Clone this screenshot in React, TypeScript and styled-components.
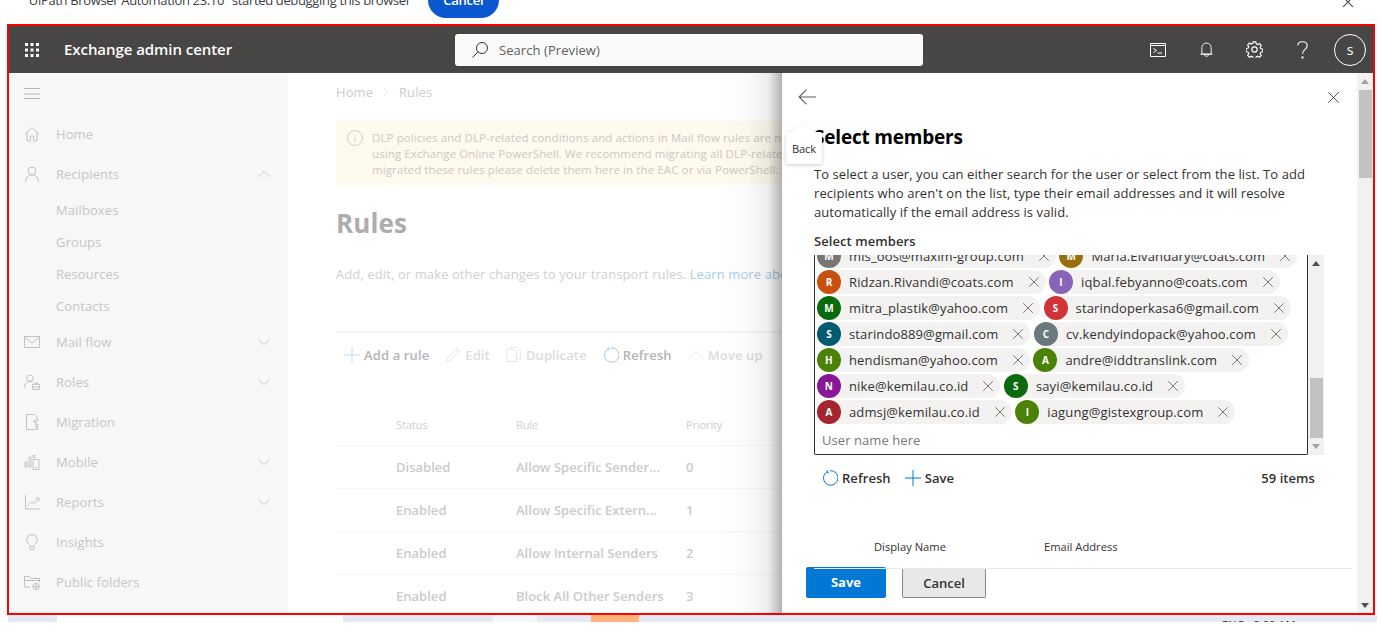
import styled, { createGlobalStyle } from "styled-components";
import { ChevronDown, ChevronUp, ChevronRight, X } from "lucide-react";

const GlobalStyle = createGlobalStyle`
  html, body { margin: 0; padding: 0; background: #fff; overflow: hidden; }
  body { font-family: "Open Sans", "Liberation Sans", sans-serif; font-size: 13px; letter-spacing: 0.07px; color: #323130; }
  * { box-sizing: border-box; }
`;

const Page = styled.div`
  width: 1382px;
  height: 639px;
  overflow: hidden;
`;

const InfoBar = styled.div`
  height: 24px;
  overflow: hidden;
  position: relative;
  display: flex;
  align-items: center;
  padding-left: 24px;
  gap: 17px;
  color: #3c4043;
  font-size: 13px;
  letter-spacing: -0.34px;
  & > * { margin-top: -24px; }
`;

const InfoCancel = styled.button`
  width: 71px;
  height: 36px;
  border: none;
  border-radius: 18px;
  background: #0b57d0;
  color: #fff;
  font: 600 13px "Open Sans", sans-serif;
  letter-spacing: -0.25px;
`;

const InfoClose = styled.span`
  position: absolute;
  left: 1342px;
  top: -6px;
  margin: 0;
  color: #444;
`;

const Frame = styled.div`
  margin: 0 7px;
  height: 591px;
  border: 2px solid #f00;
  display: flex;
  flex-direction: column;
  overflow: hidden;
`;

const Header = styled.header`
  height: 47px;
  flex: none;
  background: #484644;
  display: flex;
  align-items: center;
  color: #fff;
  padding-left: 15px;
`;

const Title = styled.div`
  font-size: 15px;
  font-weight: 600;
  margin: 0 0 2px 24px;
  width: 391px;
  letter-spacing: -0.06px;
`;

const SearchBox = styled.div`
  width: 468px;
  height: 32px;
  background: #fafafa;
  border-radius: 3px;
  display: flex;
  align-items: center;
  padding-left: 17px;
  gap: 11px;
  color: #605e5c;
  font-size: 13px;
`;

const HeaderIcons = styled.div`
  margin-left: auto;
  display: flex;
  align-items: center;
  padding-right: 7px;
`;

const HeaderIcon = styled.div<{ $w: number }>`
  width: ${(p) => p.$w}px;
  display: flex;
  justify-content: flex-start;
`;

const Avatar = styled.div`
  width: 32px;
  height: 32px;
  border: 1px solid #fff;
  border-radius: 50%;
  display: flex;
  align-items: center;
  justify-content: center;
  font-size: 14px;
`;

const Body = styled.div`
  flex: 1;
  min-height: 0;
  display: flex;
`;

const Sidebar = styled.nav`
  width: 279px;
  flex: none;
  background: #f7f7f7;
  color: #c6c6c6;
  font-size: 13px;
  letter-spacing: 0.1px;
`;

const MenuToggle = styled.div`
  height: 41px;
  display: flex;
  align-items: center;
  padding: 0 0 0 15px;
`;

const NavItem = styled.div<{ $sub?: boolean }>`
  height: ${(p) => (p.$sub ? 32 : 40)}px;
  display: flex;
  align-items: center;
  padding-left: ${(p) => (p.$sub ? 47 : 15)}px;
  svg.lead { margin-right: 16px; flex: none; }
`;

const NavChevron = styled.span`
  margin-left: auto;
  margin-right: 13px;
  display: flex;
`;

const Main = styled.main`
  width: 494px;
  flex: none;
  position: relative;
  overflow: hidden;
  padding: 0 0 0 48px;
  color: #c9c9c9;

  &::after {
    content: "";
    position: absolute;
    top: 0;
    right: 0;
    bottom: 0;
    width: 64px;
    background: linear-gradient(to right, rgba(0, 0, 0, 0), rgba(0, 0, 0, 0.015) 45%, rgba(0, 0, 0, 0.07) 78%, rgba(0, 0, 0, 0.3));
  }
`;

const Breadcrumb = styled.div`
  height: 38px;
  display: flex;
  align-items: center;
  gap: 6px;
  color: #cdcdcd;
  white-space: nowrap;
`;

const Notice = styled.div`
  margin-top: 10px;
  width: 520px;
  height: 64px;
  background: #fefaee;
  padding: 9px 0 0 11px;
  display: flex;
  gap: 9px;
  font-size: 11.5px;
  line-height: 16px;
  color: #cbc8c2;
  white-space: nowrap;
  letter-spacing: 0.1px;

  svg { flex: none; }
`;

const PageTitle = styled.h1`
  margin: 20px 0 0 0;
  height: 36px;
  font-size: 26px;
  line-height: 36px;
  font-weight: 700;
  color: #adadad;
  letter-spacing: 0.1px;
`;

const Lead = styled.div`
  margin-top: 23px;
  color: #cfcfcf;
  white-space: nowrap;
  line-height: 20px;
  letter-spacing: 0.1px;
`;

const LearnLink = styled.span`
  color: #a9cdea;
`;

const Toolbar = styled.div`
  margin-top: 47px;
  width: 520px;
  height: 46px;
  border-top: 2px solid #f5f5f5;
  display: flex;
  align-items: center;
  padding-left: 8px;
  white-space: nowrap;
  font-weight: 600;
  letter-spacing: 0.12px;
`;

const ToolButton = styled.span<{ $tone: string }>`
  display: inline-flex;
  align-items: center;
  gap: 4px;
  margin-right: 16px;
  color: ${(p) => p.$tone};
`;

const RuleTable = styled.div`
  margin-top: 20px;
  width: 520px;
`;

const RuleRow = styled.div<{ $head?: boolean }>`
  height: ${(p) => (p.$head ? 49 : 43)}px;
  display: grid;
  grid-template-columns: 120px 170px 1fr;
  align-items: center;
  padding: ${(p) => (p.$head ? "7px" : "0")} 0 0 60px;
  border-bottom: 1px solid #f6f6f6;
  font-size: ${(p) => (p.$head ? 11.2 : 13)}px;
  font-weight: ${(p) => (p.$head ? 400 : 600)};
  color: ${(p) => (p.$head ? "#cfcfcf" : "#cbcbcb")};
  white-space: nowrap;
  letter-spacing: ${(p) => (p.$head ? "-0.2px" : "0.02px")};
`;

const Panel = styled.aside`
  flex: 1;
  min-width: 0;
  display: flex;
  background: #fff;
  position: relative;
`;

const PanelBody = styled.div`
  flex: 1;
  min-width: 0;
  padding: 0 0 0 32px;
`;

const PanelTop = styled.div`
  height: 48px;
  display: flex;
  align-items: center;
  justify-content: space-between;
  margin-left: -16px;
  padding: 0 17px 0 0;
`;

const PanelTitle = styled.h2`
  margin: 0;
  height: 32px;
  font-size: 19px;
  line-height: 32px;
  font-weight: 700;
  color: #000;
  letter-spacing: -0.2px;
`;

const Intro = styled.p`
  margin: 12px 0 0;
  width: 500px;
  line-height: 19px;
  color: #323130;
`;

const FieldLabel = styled.div`
  margin-top: 10px;
  height: 19px;
  line-height: 19px;
  font-weight: 600;
`;

const FieldWrap = styled.div`
  width: 511px;
  height: 200px;
  margin-top: 4px;
  display: flex;
  border-bottom: 1px solid #eee;
`;

const ChipField = styled.div`
  width: 494px;
  height: 200px;
  border: 1px solid #323130;
  border-top: none;
  overflow: hidden;
  padding: 0 0 0 2px;
  border-radius: 0 0 2px 2px;
`;

const ChipRows = styled.div`
  margin-top: -11px;
  display: flex;
  flex-direction: column;
  gap: 2px;
`;

const ChipRow = styled.div`
  display: flex;
  gap: 3.5px;
`;

const Chip = styled.div`
  height: 24px;
  background: #f3f2f1;
  border-radius: 12px;
  display: inline-flex;
  align-items: center;
  white-space: nowrap;
  color: #323130;
  letter-spacing: 0.13px;
`;

const ChipAvatar = styled.span<{ $bg: string }>`
  width: 24px;
  height: 24px;
  border-radius: 50%;
  background: ${(p) => p.$bg};
  color: #fff;
  font-size: 10px;
  font-weight: 700;
  display: flex;
  align-items: center;
  justify-content: center;
  margin-right: 8px;
  flex: none;
`;

const ChipClose = styled.span`
  margin: 0 3px 0 11px;
  display: flex;
  color: #605e5c;
`;

const NameInput = styled.div`
  height: 28px;
  margin-top: 4px;
  padding-left: 5px;
  line-height: 24px;
  color: #777;
`;

const ScrollTrack = styled.div<{ $thumbTop: number; $thumbHeight: number }>`
  width: 16px;
  flex: none;
  background: #f1f1f1;
  position: relative;
  height: 100%;

  &::before {
    content: "";
    position: absolute;
    left: 2px;
    right: 1px;
    top: ${(p) => p.$thumbTop}px;
    height: ${(p) => p.$thumbHeight}px;
    background: #c1c1c1;
  }
`;

const ScrollArrow = styled.span<{ $down?: boolean; $dark?: boolean }>`
  position: absolute;
  left: 4px;
  width: 0;
  height: 0;
  border-left: 4px solid transparent;
  border-right: 4px solid transparent;
  ${(p) =>
    p.$down
      ? `bottom: 5px; border-top: 5px solid ${p.$dark ? "#505050" : "#a3a3a3"};`
      : `top: 6px; border-bottom: 5px solid ${p.$dark ? "#505050" : "#a3a3a3"};`}
`;

const ListTools = styled.div`
  width: 501px;
  height: 46px;
  display: flex;
  align-items: center;
  padding-left: 8px;
  gap: 14px;
  color: #323130;
  font-weight: 600;
`;

const ListTool = styled.span`
  display: inline-flex;
  align-items: center;
  gap: 4px;
`;

const ItemCount = styled.span`
  margin-left: auto;
`;

const ListHeader = styled.div`
  margin-top: 24px;
  height: 44px;
  width: 538px;
  border-bottom: 1px solid #e8e8e8;
  display: grid;
  grid-template-columns: 170px 1fr;
  padding: 14px 0 0 60px;
  font-size: 11.2px;
  letter-spacing: 0px;
  position: relative;
  z-index: 1;
`;

const PanelFooter = styled.div`
  margin: -2px 0 0 -8px;
  display: flex;
  gap: 16px;
`;

const SaveButton = styled.button`
  width: 80px;
  height: 31px;
  padding: 0 0 1px;
  border: none;
  border-radius: 2px;
  background: #0078d4;
  color: #fff;
  font: 700 13px "Open Sans", sans-serif;
  letter-spacing: 0;
`;

const CancelButton = styled.button`
  width: 84px;
  height: 30px;
  padding: 0 0 1px;
  margin-top: 1px;
  border: 1px solid #8a8886;
  border-top-color: #ddd;
  border-radius: 2px;
  background: #e8e8e8;
  color: #323130;
  font: 600 13px "Open Sans", sans-serif;
  letter-spacing: 0;
`;

const BackTip = styled.div`
  position: absolute;
  left: 4px;
  top: 59px;
  width: 36px;
  height: 32px;
  background: #fff;
  border-radius: 2px;
  box-shadow: 0 1px 4px rgba(0, 0, 0, 0.2);
  font-size: 11.2px;
  display: flex;
  align-items: center;
  justify-content: center;
  letter-spacing: -0.2px;

  &::before {
    content: "";
    position: absolute;
    left: 10px;
    top: -7px;
    width: 14px;
    height: 14px;
    background: #fff;
    transform: rotate(45deg);
    box-shadow: -1px -1px 2px rgba(0, 0, 0, 0.05);
  }
`;

const TipLabel = styled.span`
  position: relative;
`;

const TaskStrip = styled.div`
  margin-left: 8px;
  width: 1369px;
  height: 7px;
  overflow: hidden;
  display: flex;
  background: #e3eaf3;
  position: relative;
`;

const TaskCell = styled.div<{ $w: number; $bg: string }>`
  width: ${(p) => p.$w}px;
  flex: none;
  background: ${(p) => p.$bg};
`;

const TaskClock = styled.span`
  position: absolute;
  left: 1214px;
  top: 3px;
  font-size: 11px;
  line-height: 14px;
  color: #222;
  white-space: pre;
`;

const Line = (p: { d: string; size?: number; color?: string; box?: number; className?: string; w?: number }) => (
  <svg className={p.className} width={p.size ?? 16} height={p.size ?? 16} viewBox={`0 0 ${p.box ?? 16} ${p.box ?? 16}`} fill="none" stroke={p.color ?? "#c4c4c4"} strokeWidth={p.w ?? 1}>
    <path d={p.d} />
  </svg>
);

const icons = {
  home: "M1 8 8 1.5 15 8M3 6.5V15h3.5v-5h3v5H13V6.5",
  person: "M8 1a4 4 0 1 0 0 8 4 4 0 0 0 0-8zM1.5 16c0-4 2.5-7 6.500-7s6.500 3 6.500 7",
  mail: "M.5 2.500h15v11H.5zM.5 3 8 9l7.500-6",
  roles: "M6 1a3.200 3.200 0 1 0 0 6.400A3.200 3.200 0 0 0 6 1zM.5 14c0-4 2-6.500 5.500-6.500 1 0 2 .3 2.500.6M8.500 10.500h7v5h-7zM10.500 10.500V9h3v1.500M8.500 13h7",
  migration: "M2.500 15.500V.5h8l3 3v4M2.500 15.500h8M13.500 10v5.500h-1.500V9M12.500 5 9.500 7.500l3 2.500M9.500 7.500H13",
  mobile: "M1 8h2v5H1zM5 3h2v10H5zM9 5.500h6v10H9zM9 1.500h2v2H9zM11 13.500h2",
  reports: "M1.500 1v14H15.500M3.500 12l4-4.500 2.500 2L15 4M11.500 4H15v3.500",
  bulb: "M8 .5a5.300 5.300 0 0 0-3 9.700c.6.5 1 1.200 1 2.300h4c0-1.100.4-1.800 1-2.300A5.300 5.300 0 0 0 8 .5zM6 12.500v3h4v-3",
  folder: "M.5 13V2.500h5L7 4.500h8.500v4M.5 13h6M.5 6.500H15M9 12.500a3.200 3.200 0 1 0 6.400 0 3.200 3.200 0 0 0-6.400 0zM9 12.500h6.400M12.200 9.300v6.400",
  plus: "M8 0v16M0 8h16",
  pencil: "M1 15l1-4L12 1l3 3L5 14zM10.500 2.500l3 3",
  copy: "M1 2h6.500l3 3v9.500H1zM4.500 2V.5h6l4 4V12h-4",
  refresh: "M5 1.800A7.200 7.200 0 1 0 8 .8M5.500 .3 5 2l1.800 .8",
  up: "M.5 12 8 4.500 15.500 12",
  back: "M16 8H1M7.500 1.500 1 8l6.500 6.500",
  close: "M1.500 1.500l13 13M14.500 1.500l-13 13",
  info: "M8 .5a7.500 7.500 0 1 0 0 15 7.500 7.500 0 0 0 0-15zM8 7v5M8 4.500v1.200",
};

const GridDots = () => (
  <svg width="16" height="16" viewBox="0 0 16 16" fill="#fff">
    {[1, 6.500, 12].flatMap((y) => [1, 6.500, 12].map((x) => <rect key={`${x}-${y}`} x={x} y={y} width="3" height="3" />))}
  </svg>
);

type NavEntry = { label: string; icon?: keyof typeof icons; sub?: boolean; chevron?: "up" | "down" };

const navItems: NavEntry[] = [
  { label: "Home", icon: "home" },
  { label: "Recipients", icon: "person", chevron: "up" },
  { label: "Mailboxes", sub: true },
  { label: "Groups", sub: true },
  { label: "Resources", sub: true },
  { label: "Contacts", sub: true },
  { label: "Mail flow", icon: "mail", chevron: "down" },
  { label: "Roles", icon: "roles", chevron: "down" },
  { label: "Migration", icon: "migration" },
  { label: "Mobile", icon: "mobile", chevron: "down" },
  { label: "Reports", icon: "reports", chevron: "down" },
  { label: "Insights", icon: "bulb" },
  { label: "Public folders", icon: "folder" },
];

const rules = [
  ["Disabled", "Allow Specific Sender...", "0"],
  ["Enabled", "Allow Specific Extern...", "1"],
  ["Enabled", "Allow Internal Senders", "2"],
  ["Enabled", "Block All Other Senders", "3"],
];

const chipRows: [string, string, string][][] = [
  [["M", "#7a7574", "mis_oos@maxim-group.com"], ["M", "#986f0b", "Maria.Elvandary@coats.com"]],
  [["R", "#ca5010", "Ridzan.Rivandi@coats.com"], ["I", "#8764b8", "iqbal.febyanno@coats.com"]],
  [["M", "#0b6a0b", "mitra_plastik@yahoo.com"], ["S", "#d13438", "starindoperkasa6@gmail.com"]],
  [["S", "#005b70", "starindo889@gmail.com"], ["C", "#69797e", "cv.kendyindopack@yahoo.com"]],
  [["H", "#498205", "hendisman@yahoo.com"], ["A", "#498205", "andre@iddtranslink.com"]],
  [["N", "#881798", "nike@kemilau.co.id"], ["S", "#0b6a0b", "sayi@kemilau.co.id"]],
  [["A", "#a4262c", "admsj@kemilau.co.id"], ["I", "#498205", "iagung@gistexgroup.com"]],
];

const App = () => (
  <Page>
    <GlobalStyle />
    <InfoBar>
      <span>"UiPath Browser Automation 23.10" started debugging this browser</span>
      <InfoCancel>Cancel</InfoCancel>
      <InfoClose><Line d={icons.close} size={12} color="#444" w={1.4} /></InfoClose>
    </InfoBar>
    <Frame>
      <Header>
        <GridDots />
        <Title>Exchange admin center</Title>
        <SearchBox>
          <svg width="16" height="16" viewBox="0 0 16 16" fill="none" stroke="#323130">
            <path d="M10 .5a5.500 5.500 0 1 0 0 11 5.500 5.500 0 0 0 0-11zM6 9.800.5 15.500" />
          </svg>
          Search (Preview)
        </SearchBox>
        <HeaderIcons>
          <HeaderIcon $w={50}>
            <svg width="16" height="14" viewBox="0 0 16 14" fill="none" stroke="#fff">
              <path d="M.5 .5h15v13H.5zM.5 2.500h15M3.500 5.500l3 2-3 2M7.500 10h4.500" />
            </svg>
          </HeaderIcon>
          <HeaderIcon $w={46}>
            <svg width="13" height="16" viewBox="0 0 14 16" fill="none" stroke="#fff">
              <path d="M2 12.500V5.500a5 5 0 0 1 10 0v7zM.5 12.500h13M5 13c0 2.500 4 2.500 4 0" />
            </svg>
          </HeaderIcon>
          <HeaderIcon $w={51}>
            <svg width="17" height="17" viewBox="0 0 16 16" fill="none" stroke="#fff" strokeWidth="1.100">
              <path d="M6.700.7h2.600l.4 2 1.500.7 1.800-1 1.700 1.900-1.100 1.600.6 1.500 2 .5v2.500l-2 .5-.6 1.500 1.100 1.700-1.800 1.800-1.700-1.100-1.500.6-.4 2H6.700l-.4-2-1.500-.6-1.700 1.100-1.800-1.800 1.100-1.700-.6-1.500-2-.5V7.400l2-.5.6-1.500L1.300 3.800 3 1.900l1.800 1 1.500-.7z" transform="translate(.3 .1) scale(.96)" />
              <circle cx="8" cy="8" r="2.500" />
            </svg>
          </HeaderIcon>
          <HeaderIcon $w={37}>
            <svg width="11" height="18" viewBox="0 0 11 18" fill="none" stroke="#fff" strokeWidth="1.100">
              <path d="M.8 4.500C.8 2 3 .7 5.500 .7c2.600 0 4.700 1.500 4.700 4 0 3.800-4.700 3.700-4.700 8.300" />
              <circle cx="5.500" cy="16.500" r=".6" fill="#fff" />
            </svg>
          </HeaderIcon>
          <Avatar>s</Avatar>
        </HeaderIcons>
      </Header>
      <Body>
        <Sidebar>
          <MenuToggle>
            <Line d="M0 2.500h16M0 8h16M0 12.500h16" color="#b4b4b4" />
          </MenuToggle>
          {navItems.map((item) => (
            <NavItem key={item.label} $sub={item.sub}>
              {item.icon && <Line className="lead" d={icons[item.icon]} color="#c2c2c2" />}
              {item.label}
              {item.chevron && (
                <NavChevron>
                  {item.chevron === "up"
                    ? <ChevronUp size={22} strokeWidth={0.8} color="#b8b8b8" />
                    : <ChevronDown size={22} strokeWidth={0.8} color="#b8b8b8" />}
                </NavChevron>
              )}
            </NavItem>
          ))}
        </Sidebar>
        <Main>
          <Breadcrumb>
            Home
            <ChevronRight size={14} strokeWidth={1} color="#d0d0d0" />
            Rules
          </Breadcrumb>
          <Notice>
            <Line d={icons.info} color="#d0cdc6" />
            <div>
              DLP policies and DLP-related conditions and actions in Mail flow rules are no longer supported<br />
              using Exchange Online PowerShell. We recommend migrating all DLP-related rules to the new<br />
              migrated these rules please delete them here in the EAC or via PowerShell. Learn more
            </div>
          </Notice>
          <PageTitle>Rules</PageTitle>
          <Lead>Add, edit, or make other changes to your transport rules. <LearnLink>Learn more about rules</LearnLink></Lead>
          <Toolbar>
            <ToolButton $tone="#b4b4b4"><Line d={icons.plus} color="#c2dcf2" />Add a rule</ToolButton>
            <ToolButton $tone="#dcdcdc"><Line d={icons.pencil} color="#e6e6e6" />Edit</ToolButton>
            <ToolButton $tone="#dcdcdc"><Line d={icons.copy} color="#e6e6e6" />Duplicate</ToolButton>
            <ToolButton $tone="#b4b4b4"><Line d={icons.refresh} color="#9cc6e8" />Refresh</ToolButton>
            <ToolButton $tone="#dcdcdc"><Line d={icons.up} color="#e6e6e6" />Move up</ToolButton>
          </Toolbar>
          <RuleTable>
            <RuleRow $head><span>Status</span><span>Rule</span><span>Priority</span></RuleRow>
            {rules.map(([status, rule, priority]) => (
              <RuleRow key={rule}><span>{status}</span><span>{rule}</span><span>{priority}</span></RuleRow>
            ))}
          </RuleTable>
        </Main>
        <Panel>
          <PanelBody>
            <PanelTop>
              <Line d={icons.back} size={18} box={16} color="#605e5c" />
              <Line d={icons.close} size={13} color="#323130" />
            </PanelTop>
            <PanelTitle>Select members</PanelTitle>
            <Intro>
              To select a user, you can either search for the user or select from the list. To add recipients who aren't on the list, type their email addresses and it will resolve automatically if the email address is valid.
            </Intro>
            <FieldLabel>Select members</FieldLabel>
            <FieldWrap>
              <ChipField>
                <ChipRows>
                  {chipRows.map((row) => (
                    <ChipRow key={row[0][2]}>
                      {row.map(([letter, bg, mail]) => (
                        <Chip key={mail}>
                          <ChipAvatar $bg={bg}>{letter}</ChipAvatar>
                          {mail}
                          <ChipClose><X size={18} strokeWidth={1.1} /></ChipClose>
                        </Chip>
                      ))}
                    </ChipRow>
                  ))}
                </ChipRows>
                <NameInput>User name here</NameInput>
              </ChipField>
              <ScrollTrack $thumbTop={123} $thumbHeight={60}>
                <ScrollArrow $dark />
                <ScrollArrow $down />
              </ScrollTrack>
            </FieldWrap>
            <ListTools>
              <ListTool><Line d={icons.refresh} color="#0078d4" />Refresh</ListTool>
              <ListTool><Line d={icons.plus} color="#0078d4" />Save</ListTool>
              <ItemCount>59 items</ItemCount>
            </ListTools>
            <ListHeader><span>Display Name</span><span>Email Address</span></ListHeader>
            <PanelFooter>
              <SaveButton>Save</SaveButton>
              <CancelButton>Cancel</CancelButton>
            </PanelFooter>
          </PanelBody>
          <ScrollTrack $thumbTop={17} $thumbHeight={88}>
            <ScrollArrow />
            <ScrollArrow $down $dark />
          </ScrollTrack>
          <BackTip><TipLabel>Back</TipLabel></BackTip>
        </Panel>
      </Body>
    </Frame>
    <TaskStrip>
      <TaskCell $w={49} $bg="#e3eaf3" />
      <TaskCell $w={286} $bg="#fff" />
      <TaskCell $w={150} $bg="#e3eaf3" />
      <TaskCell $w={44} $bg="#f3f5f9" />
      <TaskCell $w={54} $bg="#e3eaf3" />
      <TaskCell $w={48} $bg="#ffb27a" />
      <TaskClock>ENG   9:00 AM</TaskClock>
    </TaskStrip>
  </Page>
);

export default App;
